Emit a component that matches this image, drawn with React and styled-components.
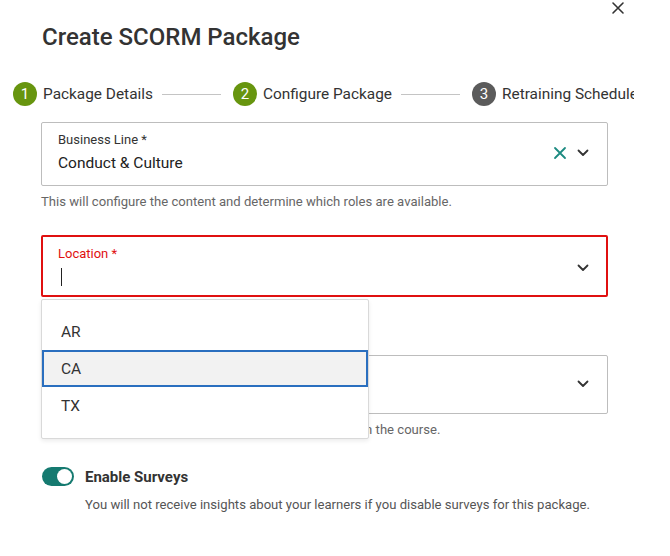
import styled, { createGlobalStyle } from "styled-components";

const GlobalStyle = createGlobalStyle`
  html, body {
    margin: 0;
    padding: 0;
    background: #fff;
    overflow: hidden;
  }
  body {
    font-family: Roboto, "Liberation Sans", Arial, sans-serif;
    color: #333;
  }
`;

const Dialog = styled.div`
  width: 670px;
  height: 556px;
  display: flex;
  flex-direction: column;
  overflow: hidden;
`;

const TopBar = styled.div`
  display: flex;
  justify-content: flex-end;
  padding: 1px 45px 0 0;
  height: 14px;
`;

const CloseButton = styled.button`
  border: none;
  background: none;
  padding: 0;
  width: 14px;
  height: 14px;
  display: flex;
  color: #333;
  cursor: pointer;
`;

const Title = styled.h1`
  margin: 7px 0 0 42px;
  font-size: 24px;
  font-weight: 500;
  line-height: 30px;
  color: #333;
`;

const Stepper = styled.div`
  display: flex;
  align-items: center;
  margin: 30px 0 0 13px;
  width: 621px;
  overflow: hidden;
  white-space: nowrap;
`;

const Step = styled.div`
  display: flex;
  align-items: center;
  gap: 6px;
  flex-shrink: 0;
`;

const StepDot = styled.span`
  width: 24px;
  height: 24px;
  border-radius: 50%;
  background: ${(p) => (p.$done ? "#67950f" : "#5b5b5b")};
  color: #fff;
  font-size: 15px;
  display: flex;
  align-items: center;
  justify-content: center;
`;

const StepLabel = styled.span`
  font-size: 15.4px;
  color: #333;
`;

const StepLine = styled.span`
  width: 59px;
  height: 1px;
  background: #c4c4c4;
  margin: 0 12px 0 3px;
  flex-shrink: 0;
`;

const Form = styled.div`
  display: flex;
  flex-direction: column;
  margin: 16px 0 0 41px;
  width: 567px;
`;

const Field = styled.div`
  position: relative;
  margin-top: ${(p) => p.$gap || 0}px;
`;

const SelectBox = styled.div`
  box-sizing: border-box;
  height: ${(p) => p.$h || 64}px;
  border: ${(p) => (p.$error ? "2px solid #e01010" : "1px solid #bdbdbd")};
  border-radius: 2px;
  display: flex;
  align-items: center;
  padding: ${(p) => (p.$error ? "0 17px 0 15px" : "0 18px 4px 16px")};
`;

const SelectText = styled.div`
  flex: 1;
  display: flex;
  flex-direction: column;
  gap: 5px;
`;

const FieldLabel = styled.div`
  font-size: 13px;
  line-height: 16px;
  color: ${(p) => (p.$error ? "#e01010" : "#333")};
`;

const FieldValue = styled.div`
  font-size: 15.5px;
  line-height: 20px;
  color: #222;
  height: 20px;
  display: flex;
  align-items: center;
`;

const Caret = styled.span`
  width: 1px;
  height: 18px;
  background: #222;
  margin-left: 3px;
`;

const Icons = styled.div`
  display: flex;
  align-items: center;
  gap: 10px;
  margin-top: 2px;
`;

const ArrowSlot = styled.span`
  display: flex;
  margin-top: 3px;
`;

const Helper = styled.div`
  font-size: 13.1px;
  line-height: 16px;
  color: #666;
  margin-top: 8px;
`;

const Menu = styled.ul`
  position: absolute;
  top: calc(100% + 2px);
  left: 0;
  width: 328px;
  box-sizing: border-box;
  margin: 0;
  padding: 13px 0 14px;
  list-style: none;
  background: #fff;
  border: 1px solid #d9d9d9;
  border-radius: 2px;
  box-shadow: 0 2px 4px rgba(0, 0, 0, 0.08);
  z-index: 2;
`;

const MenuItem = styled.li`
  box-sizing: border-box;
  height: 37px;
  display: flex;
  align-items: center;
  padding: 0 17px;
  font-size: 15.5px;
  color: #333;
  background: ${(p) => (p.$active ? "#f2f2f2" : "transparent")};
  border: 2px solid ${(p) => (p.$active ? "#2a6fbf" : "transparent")};
`;

const ToggleRow = styled.div`
  display: flex;
  align-items: center;
  gap: 11px;
  margin: 29px 0 0 42px;
`;

const Toggle = styled.span`
  width: 32px;
  height: 19px;
  border-radius: 10px;
  background: #157a70;
  display: flex;
  align-items: center;
  justify-content: flex-end;
  padding: 0 2px;
  box-sizing: border-box;
`;

const Knob = styled.span`
  width: 15px;
  height: 15px;
  border-radius: 50%;
  background: #fff;
`;

const ToggleLabel = styled.span`
  font-size: 15px;
  font-weight: 700;
  color: #333;
`;

const ToggleHint = styled.div`
  margin: 11px 0 0 85px;
  font-size: 13.1px;
  color: #555;
`;

const Cross = ({ size = 14, color = "#333", width = 1.8 }) => (
  <svg width={size} height={size} viewBox="0 0 14 14">
    <path d="M2 2 L12 12 M12 2 L2 12" stroke={color} strokeWidth={width} strokeLinecap="round" />
  </svg>
);

const Chevron = () => (
  <svg width="12" height="8" viewBox="0 0 12 8">
    <path d="M1.5 1.5 L6 6 L10.5 1.5" fill="none" stroke="#333" strokeWidth="1.8" strokeLinecap="round" strokeLinejoin="round" />
  </svg>
);

const steps = [
  { n: 1, label: "Package Details", done: true },
  { n: 2, label: "Configure Package", done: true },
  { n: 3, label: "Retraining Schedule", done: false },
];

const App = () => {
  return (
    <Dialog>
      <GlobalStyle />
      <TopBar>
        <CloseButton aria-label="Close">
          <Cross size={14} color="#333" width={1.6} />
        </CloseButton>
      </TopBar>
      <Title>Create SCORM Package</Title>

      <Stepper>
        {steps.map((s, i) => (
          <Step key={s.n}>
            <StepDot $done={s.done}>{s.n}</StepDot>
            <StepLabel>{s.label}</StepLabel>
            {i < steps.length - 1 && <StepLine />}
          </Step>
        ))}
      </Stepper>

      <Form>
        <Field>
          <SelectBox>
            <SelectText>
              <FieldLabel>Business Line *</FieldLabel>
              <FieldValue>Conduct &amp; Culture</FieldValue>
            </SelectText>
            <Icons>
              <Cross size={14} color="#1c8a80" width={1.8} />
              <Chevron />
            </Icons>
          </SelectBox>
          <Helper>This will configure the content and determine which roles are available.</Helper>
        </Field>

        <Field $gap={25}>
          <SelectBox $error $h={62}>
            <SelectText>
              <FieldLabel $error>Location *</FieldLabel>
              <FieldValue>
                <Caret />
              </FieldValue>
            </SelectText>
            <ArrowSlot>
              <Chevron />
            </ArrowSlot>
          </SelectBox>
          <Menu>
            <MenuItem>AR</MenuItem>
            <MenuItem $active>CA</MenuItem>
            <MenuItem>TX</MenuItem>
          </Menu>
        </Field>

        <Field $gap={58}>
          <SelectBox $h={59}>
            <SelectText />
            <ArrowSlot>
              <Chevron />
            </ArrowSlot>
          </SelectBox>
          <Helper>Pick the roles of the learners who will need to take part in the course.</Helper>
        </Field>
      </Form>

      <ToggleRow>
        <Toggle>
          <Knob />
        </Toggle>
        <ToggleLabel>Enable Surveys</ToggleLabel>
      </ToggleRow>
      <ToggleHint>You will not receive insights about your learners if you disable surveys for this package.</ToggleHint>
    </Dialog>
  );
};

export default App;
